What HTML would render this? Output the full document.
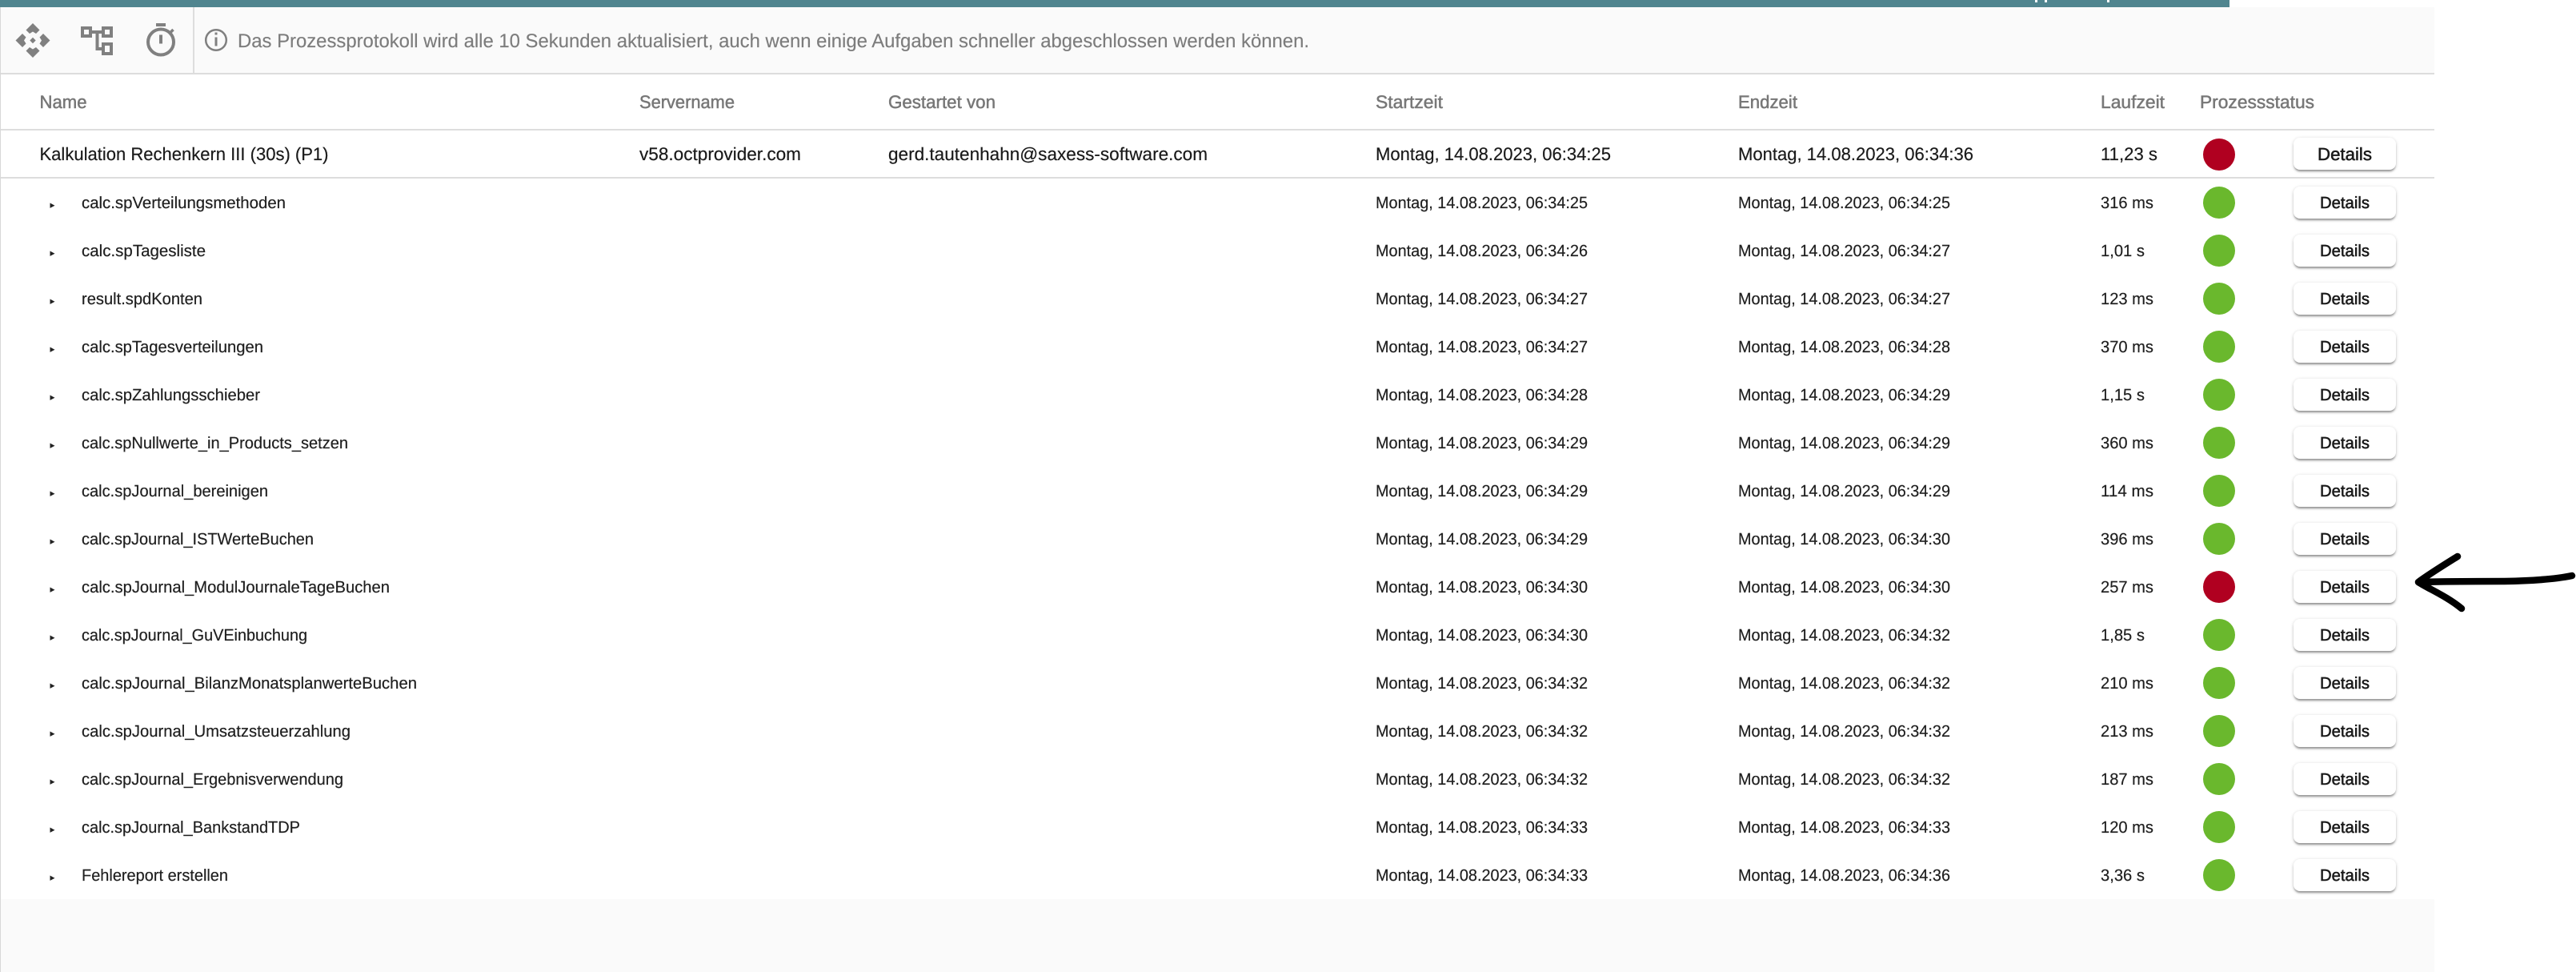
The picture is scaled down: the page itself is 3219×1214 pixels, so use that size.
<!DOCTYPE html>
<html lang="de">
<head>
<meta charset="utf-8">
<title>Prozessprotokoll</title>
<style>
html,body{margin:0;padding:0;background:#fff;width:3219px;height:1214px;overflow:hidden}
.a{position:absolute}
.b{position:absolute;width:128px;height:40px;left:2866px;background:#fff;border-radius:8px;box-shadow:0 3px 2px -1px rgba(0,0,0,.32),0 2px 4px rgba(0,0,0,.14),0 0 4px rgba(0,0,0,.08)}
svg{position:absolute;left:0;top:0}
text{font-family:"Liberation Sans",Arial,sans-serif;fill:#222;text-rendering:geometricPrecision}
.h{font-size:22.5px;fill:#777;stroke:#777;stroke-width:.5px}
.t{font-size:22.5px;fill:#1a1a1a;stroke:#1a1a1a;stroke-width:.2px}
.s{font-size:20.5px;fill:#1f1f1f;stroke:#1f1f1f;stroke-width:.2px}
.d{font-size:20.5px;fill:#1a1a1a;stroke:#1a1a1a;stroke-width:.55px}
.dt{font-size:22px;fill:#1a1a1a;stroke:#1a1a1a;stroke-width:.55px}
.i{font-size:24px;fill:#7c7c7c;stroke:#7c7c7c;stroke-width:.15px}
</style>
</head>
<body>
<div class="a" style="left:0;top:0;width:2786px;height:9px;background:#50858f"></div>
<div class="a" style="left:2543px;top:0;width:3px;height:3px;background:#fff"></div>
<div class="a" style="left:2555px;top:0;width:3px;height:3px;background:#fff"></div>
<div class="a" style="left:2633px;top:0;width:3px;height:3px;background:#fff"></div>
<div class="a" style="left:0;top:9px;width:3042px;height:82px;background:#fafafa"></div>
<div class="a" style="left:241px;top:9px;width:2px;height:82px;background:#ddd"></div>
<div class="a" style="left:0;top:91px;width:3042px;height:2px;background:#ddd"></div>
<div class="a" style="left:0;top:161px;width:3042px;height:2px;background:#ddd"></div>
<div class="a" style="left:0;top:221px;width:3042px;height:2px;background:#ddd"></div>
<div class="a" style="left:0;top:1123px;width:3042px;height:91px;background:#fafafa"></div>
<div class="a" style="left:0;top:9px;width:1px;height:1205px;background:#d8d8d8"></div>

<div class="b" style="top:172px"></div>
<div class="b" style="top:233px"></div>
<div class="b" style="top:293px"></div>
<div class="b" style="top:353px"></div>
<div class="b" style="top:413px"></div>
<div class="b" style="top:473px"></div>
<div class="b" style="top:533px"></div>
<div class="b" style="top:593px"></div>
<div class="b" style="top:653px"></div>
<div class="b" style="top:713px"></div>
<div class="b" style="top:773px"></div>
<div class="b" style="top:833px"></div>
<div class="b" style="top:893px"></div>
<div class="b" style="top:953px"></div>
<div class="b" style="top:1013px"></div>
<div class="b" style="top:1073px"></div>

<svg width="3219" height="1214" viewBox="0 0 3219 1214" xmlns="http://www.w3.org/2000/svg">
<!-- toolbar icons -->
<g fill="#808080">
<path d="M41 29L49.500 37.500 45 42 41 39.500 37 42 32.500 37.500Z"/>
<path d="M41 29L49.500 37.500 45 42 41 39.500 37 42 32.500 37.500Z" transform="rotate(90 41 50.500)"/>
<path d="M41 29L49.500 37.500 45 42 41 39.500 37 42 32.500 37.500Z" transform="rotate(180 41 50.500)"/>
<path d="M41 29L49.500 37.500 45 42 41 39.500 37 42 32.500 37.500Z" transform="rotate(270 41 50.500)"/>
<path d="M41 46.800L44.700 50.500 41 54.200 37.300 50.500Z"/>
</g>
<g fill="none" stroke="#808080" stroke-width="4">
<rect x="103" y="35" width="10" height="10"/>
<rect x="129" y="35" width="10" height="10"/>
<rect x="129" y="55" width="10" height="12"/>
<path d="M114 40H129M121.500 40V61H129" stroke-width="4"/>
<circle cx="201" cy="52.500" r="16"/>
<path d="M212 41.500L216.500 37" stroke-width="3.500"/>
</g>
<rect x="195" y="29" width="12" height="4" fill="#808080"/>
<rect x="199" y="43.500" width="4" height="11" fill="#808080"/>
<circle cx="270" cy="50" r="12.800" fill="none" stroke="#808080" stroke-width="2.500"/>
<rect x="268.500" y="40.500" width="3" height="3" fill="#808080"/>
<rect x="268.500" y="46.500" width="3" height="11" fill="#808080"/>
<text class="i" x="297" y="59" textLength="1339" lengthAdjust="spacingAndGlyphs">Das Prozessprotokoll wird alle 10 Sekunden aktualisiert, auch wenn einige Aufgaben schneller abgeschlossen werden können.</text>

<!-- header -->
<text class="h" x="49.500" y="135" textLength="59" lengthAdjust="spacingAndGlyphs">Name</text>
<text class="h" x="799" y="135" textLength="119" lengthAdjust="spacingAndGlyphs">Servername</text>
<text class="h" x="1110" y="135" textLength="134" lengthAdjust="spacingAndGlyphs">Gestartet von</text>
<text class="h" x="1719" y="135" textLength="84" lengthAdjust="spacingAndGlyphs">Startzeit</text>
<text class="h" x="2172" y="135" textLength="74" lengthAdjust="spacingAndGlyphs">Endzeit</text>
<text class="h" x="2625" y="135" textLength="80" lengthAdjust="spacingAndGlyphs">Laufzeit</text>
<text class="h" x="2749" y="135" textLength="143" lengthAdjust="spacingAndGlyphs">Prozessstatus</text>

<!-- top row -->
<text class="t" x="49.500" y="200" textLength="361" lengthAdjust="spacingAndGlyphs">Kalkulation Rechenkern III (30s) (P1)</text>
<text class="t" x="799" y="200" textLength="202" lengthAdjust="spacingAndGlyphs">v58.octprovider.com</text>
<text class="t" x="1110" y="200" textLength="399" lengthAdjust="spacingAndGlyphs">gerd.tautenhahn@saxess-software.com</text>
<text class="t" x="1719" y="200" textLength="294" lengthAdjust="spacingAndGlyphs">Montag, 14.08.2023, 06:34:25</text>
<text class="t" x="2172" y="200" textLength="294" lengthAdjust="spacingAndGlyphs">Montag, 14.08.2023, 06:34:36</text>
<text class="t" x="2625" y="200" textLength="71" lengthAdjust="spacingAndGlyphs">11,23 s</text>
<circle cx="2773" cy="193" r="20" fill="#b00020"/>
<text class="dt" x="2896" y="200" textLength="68" lengthAdjust="spacingAndGlyphs">Details</text>

<!-- bullets -->
<g fill="#222">
<path d="M62.500 253.500L68.500 256.700 62.500 259.900Z"/>
<path d="M62.500 313.500L68.500 316.700 62.500 319.900Z"/>
<path d="M62.500 373.500L68.500 376.700 62.500 379.900Z"/>
<path d="M62.500 433.500L68.500 436.700 62.500 439.900Z"/>
<path d="M62.500 493.500L68.500 496.700 62.500 499.900Z"/>
<path d="M62.500 553.500L68.500 556.700 62.500 559.900Z"/>
<path d="M62.500 613.500L68.500 616.700 62.500 619.900Z"/>
<path d="M62.500 673.500L68.500 676.700 62.500 679.900Z"/>
<path d="M62.500 733.500L68.500 736.700 62.500 739.900Z"/>
<path d="M62.500 793.500L68.500 796.700 62.500 799.900Z"/>
<path d="M62.500 853.500L68.500 856.700 62.500 859.900Z"/>
<path d="M62.500 913.500L68.500 916.700 62.500 919.900Z"/>
<path d="M62.500 973.500L68.500 976.700 62.500 979.900Z"/>
<path d="M62.500 1033.500L68.500 1036.700 62.500 1039.900Z"/>
<path d="M62.500 1093.500L68.500 1096.700 62.500 1099.900Z"/>
</g>

<!-- names -->
<text class="s" x="102" y="260" textLength="255" lengthAdjust="spacingAndGlyphs">calc.spVerteilungsmethoden</text>
<text class="s" x="102" y="320" textLength="155" lengthAdjust="spacingAndGlyphs">calc.spTagesliste</text>
<text class="s" x="102" y="380" textLength="151" lengthAdjust="spacingAndGlyphs">result.spdKonten</text>
<text class="s" x="102" y="440" textLength="227" lengthAdjust="spacingAndGlyphs">calc.spTagesverteilungen</text>
<text class="s" x="102" y="500" textLength="223" lengthAdjust="spacingAndGlyphs">calc.spZahlungsschieber</text>
<text class="s" x="102" y="560" textLength="333" lengthAdjust="spacingAndGlyphs">calc.spNullwerte_in_Products_setzen</text>
<text class="s" x="102" y="620" textLength="233" lengthAdjust="spacingAndGlyphs">calc.spJournal_bereinigen</text>
<text class="s" x="102" y="680" textLength="290" lengthAdjust="spacingAndGlyphs">calc.spJournal_ISTWerteBuchen</text>
<text class="s" x="102" y="740" textLength="385" lengthAdjust="spacingAndGlyphs">calc.spJournal_ModulJournaleTageBuchen</text>
<text class="s" x="102" y="800" textLength="282" lengthAdjust="spacingAndGlyphs">calc.spJournal_GuVEinbuchung</text>
<text class="s" x="102" y="860" textLength="419" lengthAdjust="spacingAndGlyphs">calc.spJournal_BilanzMonatsplanwerteBuchen</text>
<text class="s" x="102" y="920" textLength="336" lengthAdjust="spacingAndGlyphs">calc.spJournal_Umsatzsteuerzahlung</text>
<text class="s" x="102" y="980" textLength="327" lengthAdjust="spacingAndGlyphs">calc.spJournal_Ergebnisverwendung</text>
<text class="s" x="102" y="1040" textLength="273" lengthAdjust="spacingAndGlyphs">calc.spJournal_BankstandTDP</text>
<text class="s" x="102" y="1100" textLength="183" lengthAdjust="spacingAndGlyphs">Fehlereport erstellen</text>

<!-- start -->
<text class="s" x="1719" y="260" textLength="265" lengthAdjust="spacingAndGlyphs">Montag, 14.08.2023, 06:34:25</text>
<text class="s" x="1719" y="320" textLength="265" lengthAdjust="spacingAndGlyphs">Montag, 14.08.2023, 06:34:26</text>
<text class="s" x="1719" y="380" textLength="265" lengthAdjust="spacingAndGlyphs">Montag, 14.08.2023, 06:34:27</text>
<text class="s" x="1719" y="440" textLength="265" lengthAdjust="spacingAndGlyphs">Montag, 14.08.2023, 06:34:27</text>
<text class="s" x="1719" y="500" textLength="265" lengthAdjust="spacingAndGlyphs">Montag, 14.08.2023, 06:34:28</text>
<text class="s" x="1719" y="560" textLength="265" lengthAdjust="spacingAndGlyphs">Montag, 14.08.2023, 06:34:29</text>
<text class="s" x="1719" y="620" textLength="265" lengthAdjust="spacingAndGlyphs">Montag, 14.08.2023, 06:34:29</text>
<text class="s" x="1719" y="680" textLength="265" lengthAdjust="spacingAndGlyphs">Montag, 14.08.2023, 06:34:29</text>
<text class="s" x="1719" y="740" textLength="265" lengthAdjust="spacingAndGlyphs">Montag, 14.08.2023, 06:34:30</text>
<text class="s" x="1719" y="800" textLength="265" lengthAdjust="spacingAndGlyphs">Montag, 14.08.2023, 06:34:30</text>
<text class="s" x="1719" y="860" textLength="265" lengthAdjust="spacingAndGlyphs">Montag, 14.08.2023, 06:34:32</text>
<text class="s" x="1719" y="920" textLength="265" lengthAdjust="spacingAndGlyphs">Montag, 14.08.2023, 06:34:32</text>
<text class="s" x="1719" y="980" textLength="265" lengthAdjust="spacingAndGlyphs">Montag, 14.08.2023, 06:34:32</text>
<text class="s" x="1719" y="1040" textLength="265" lengthAdjust="spacingAndGlyphs">Montag, 14.08.2023, 06:34:33</text>
<text class="s" x="1719" y="1100" textLength="265" lengthAdjust="spacingAndGlyphs">Montag, 14.08.2023, 06:34:33</text>

<!-- end -->
<text class="s" x="2172" y="260" textLength="265" lengthAdjust="spacingAndGlyphs">Montag, 14.08.2023, 06:34:25</text>
<text class="s" x="2172" y="320" textLength="265" lengthAdjust="spacingAndGlyphs">Montag, 14.08.2023, 06:34:27</text>
<text class="s" x="2172" y="380" textLength="265" lengthAdjust="spacingAndGlyphs">Montag, 14.08.2023, 06:34:27</text>
<text class="s" x="2172" y="440" textLength="265" lengthAdjust="spacingAndGlyphs">Montag, 14.08.2023, 06:34:28</text>
<text class="s" x="2172" y="500" textLength="265" lengthAdjust="spacingAndGlyphs">Montag, 14.08.2023, 06:34:29</text>
<text class="s" x="2172" y="560" textLength="265" lengthAdjust="spacingAndGlyphs">Montag, 14.08.2023, 06:34:29</text>
<text class="s" x="2172" y="620" textLength="265" lengthAdjust="spacingAndGlyphs">Montag, 14.08.2023, 06:34:29</text>
<text class="s" x="2172" y="680" textLength="265" lengthAdjust="spacingAndGlyphs">Montag, 14.08.2023, 06:34:30</text>
<text class="s" x="2172" y="740" textLength="265" lengthAdjust="spacingAndGlyphs">Montag, 14.08.2023, 06:34:30</text>
<text class="s" x="2172" y="800" textLength="265" lengthAdjust="spacingAndGlyphs">Montag, 14.08.2023, 06:34:32</text>
<text class="s" x="2172" y="860" textLength="265" lengthAdjust="spacingAndGlyphs">Montag, 14.08.2023, 06:34:32</text>
<text class="s" x="2172" y="920" textLength="265" lengthAdjust="spacingAndGlyphs">Montag, 14.08.2023, 06:34:32</text>
<text class="s" x="2172" y="980" textLength="265" lengthAdjust="spacingAndGlyphs">Montag, 14.08.2023, 06:34:32</text>
<text class="s" x="2172" y="1040" textLength="265" lengthAdjust="spacingAndGlyphs">Montag, 14.08.2023, 06:34:33</text>
<text class="s" x="2172" y="1100" textLength="265" lengthAdjust="spacingAndGlyphs">Montag, 14.08.2023, 06:34:36</text>

<!-- durations -->
<text class="s" x="2625" y="260" textLength="66" lengthAdjust="spacingAndGlyphs">316 ms</text>
<text class="s" x="2625" y="320" textLength="55" lengthAdjust="spacingAndGlyphs">1,01 s</text>
<text class="s" x="2625" y="380" textLength="66" lengthAdjust="spacingAndGlyphs">123 ms</text>
<text class="s" x="2625" y="440" textLength="66" lengthAdjust="spacingAndGlyphs">370 ms</text>
<text class="s" x="2625" y="500" textLength="55" lengthAdjust="spacingAndGlyphs">1,15 s</text>
<text class="s" x="2625" y="560" textLength="66" lengthAdjust="spacingAndGlyphs">360 ms</text>
<text class="s" x="2625" y="620" textLength="66" lengthAdjust="spacingAndGlyphs">114 ms</text>
<text class="s" x="2625" y="680" textLength="66" lengthAdjust="spacingAndGlyphs">396 ms</text>
<text class="s" x="2625" y="740" textLength="66" lengthAdjust="spacingAndGlyphs">257 ms</text>
<text class="s" x="2625" y="800" textLength="55" lengthAdjust="spacingAndGlyphs">1,85 s</text>
<text class="s" x="2625" y="860" textLength="66" lengthAdjust="spacingAndGlyphs">210 ms</text>
<text class="s" x="2625" y="920" textLength="66" lengthAdjust="spacingAndGlyphs">213 ms</text>
<text class="s" x="2625" y="980" textLength="66" lengthAdjust="spacingAndGlyphs">187 ms</text>
<text class="s" x="2625" y="1040" textLength="66" lengthAdjust="spacingAndGlyphs">120 ms</text>
<text class="s" x="2625" y="1100" textLength="55" lengthAdjust="spacingAndGlyphs">3,36 s</text>

<!-- status -->
<g fill="#6ab82d">
<circle cx="2773" cy="253" r="20"/>
<circle cx="2773" cy="313" r="20"/>
<circle cx="2773" cy="373" r="20"/>
<circle cx="2773" cy="433" r="20"/>
<circle cx="2773" cy="493" r="20"/>
<circle cx="2773" cy="553" r="20"/>
<circle cx="2773" cy="613" r="20"/>
<circle cx="2773" cy="673" r="20"/>
<circle cx="2773" cy="733" r="20" fill="#b00020"/>
<circle cx="2773" cy="793" r="20"/>
<circle cx="2773" cy="853" r="20"/>
<circle cx="2773" cy="913" r="20"/>
<circle cx="2773" cy="973" r="20"/>
<circle cx="2773" cy="1033" r="20"/>
<circle cx="2773" cy="1093" r="20"/>
</g>

<!-- details -->
<text class="d" x="2899" y="260" textLength="62" lengthAdjust="spacingAndGlyphs">Details</text>
<text class="d" x="2899" y="320" textLength="62" lengthAdjust="spacingAndGlyphs">Details</text>
<text class="d" x="2899" y="380" textLength="62" lengthAdjust="spacingAndGlyphs">Details</text>
<text class="d" x="2899" y="440" textLength="62" lengthAdjust="spacingAndGlyphs">Details</text>
<text class="d" x="2899" y="500" textLength="62" lengthAdjust="spacingAndGlyphs">Details</text>
<text class="d" x="2899" y="560" textLength="62" lengthAdjust="spacingAndGlyphs">Details</text>
<text class="d" x="2899" y="620" textLength="62" lengthAdjust="spacingAndGlyphs">Details</text>
<text class="d" x="2899" y="680" textLength="62" lengthAdjust="spacingAndGlyphs">Details</text>
<text class="d" x="2899" y="740" textLength="62" lengthAdjust="spacingAndGlyphs">Details</text>
<text class="d" x="2899" y="800" textLength="62" lengthAdjust="spacingAndGlyphs">Details</text>
<text class="d" x="2899" y="860" textLength="62" lengthAdjust="spacingAndGlyphs">Details</text>
<text class="d" x="2899" y="920" textLength="62" lengthAdjust="spacingAndGlyphs">Details</text>
<text class="d" x="2899" y="980" textLength="62" lengthAdjust="spacingAndGlyphs">Details</text>
<text class="d" x="2899" y="1040" textLength="62" lengthAdjust="spacingAndGlyphs">Details</text>
<text class="d" x="2899" y="1100" textLength="62" lengthAdjust="spacingAndGlyphs">Details</text>

<!-- hand-drawn arrow -->
<path d="M3022 727C3060 726 3100 726 3130 726C3160 725.500 3190 724 3214 719M3071 695C3055 705 3037 716 3022 727C3036 736 3058 745 3076 760" fill="none" stroke="#000" stroke-width="8.500" stroke-linecap="round" stroke-linejoin="round"/>
</svg>
</body>
</html>
